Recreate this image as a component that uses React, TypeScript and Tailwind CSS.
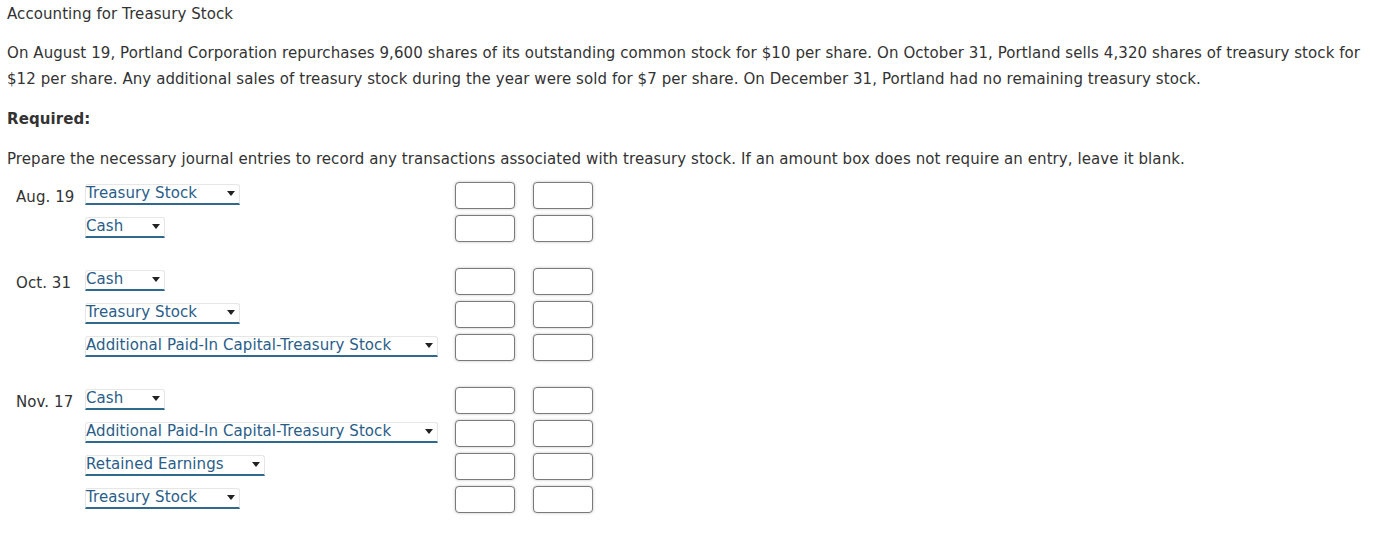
import React from 'react';

type Line = { account: string; width: string };

const groups: { date: string; lines: Line[] }[] = [
  {
    date: 'Aug. 19',
    lines: [
      { account: 'Treasury Stock', width: 'w-[155px]' },
      { account: 'Cash', width: 'w-[80px]' },
    ],
  },
  {
    date: 'Oct. 31',
    lines: [
      { account: 'Cash', width: 'w-[80px]' },
      { account: 'Treasury Stock', width: 'w-[155px]' },
      { account: 'Additional Paid-In Capital-Treasury Stock', width: 'w-[353px]' },
    ],
  },
  {
    date: 'Nov. 17',
    lines: [
      { account: 'Cash', width: 'w-[80px]' },
      { account: 'Additional Paid-In Capital-Treasury Stock', width: 'w-[353px]' },
      { account: 'Retained Earnings', width: 'w-[180px]' },
      { account: 'Treasury Stock', width: 'w-[155px]' },
    ],
  },
];

function AccountSelect({ account, width }: Line) {
  return (
    <div
      className={`${width} h-[21px] -mt-[3px] flex items-center justify-between rounded-t-[3px] border border-[#e6e6e6] border-b-2 border-b-[#2f6a8d] pl-0 pr-[4px] text-[#2a5d88] leading-none`}
    >
      <span className="whitespace-nowrap">{account}</span>
      <svg width="8" height="5" viewBox="0 0 8 5" className="shrink-0">
        <path d="M0 0h8L4 5z" fill="#222" />
      </svg>
    </div>
  );
}

function AmountBox() {
  return (
    <div className="w-[60px] h-[27px] rounded-[4px] border border-[#7a7a7a] bg-white shadow-[0_0_3px_rgba(0,0,0,0.25)]" />
  );
}

export default function App() {
  return (
    <div className="min-h-[557px] bg-white pl-[7px] pt-px text-[15px] tracking-[0.08px] text-[#333] font-['DejaVu_Sans',Verdana,sans-serif]">
      <h1 className="leading-[26px] font-normal">Accounting for Treasury Stock</h1>

      <p className="mt-[13px] leading-[26px] pr-4">
        On August 19, Portland Corporation repurchases 9,600 shares of its outstanding common stock for $10 per
        share. On October 31, Portland sells 4,320 shares of treasury stock for $12 per share. Any additional sales
        of treasury stock during the year were sold for $7 per share. On December 31, Portland had no remaining
        treasury stock.
      </p>

      <p className="mt-[14px] leading-[26px] font-bold">Required:</p>

      <p className="mt-[14px] leading-[26px]">
        Prepare the necessary journal entries to record any transactions associated with treasury stock. If an
        amount box does not require an entry, leave it blank.
      </p>

      <div className="mt-[7px] flex flex-col gap-[20px]">
        {groups.map((g) => (
          <div key={g.date} className="flex flex-col">
            {g.lines.map((line, i) => (
              <div key={i} className="flex items-center h-[33px]">
                <div className="w-[78px] pl-[9px] whitespace-nowrap pt-[3px]">{i === 0 ? g.date : ''}</div>
                <div className="w-[370px] flex items-center">
                  <AccountSelect {...line} />
                </div>
                <div className="flex gap-[18px]">
                  <AmountBox />
                  <AmountBox />
                </div>
              </div>
            ))}
          </div>
        ))}
      </div>
    </div>
  );
}
